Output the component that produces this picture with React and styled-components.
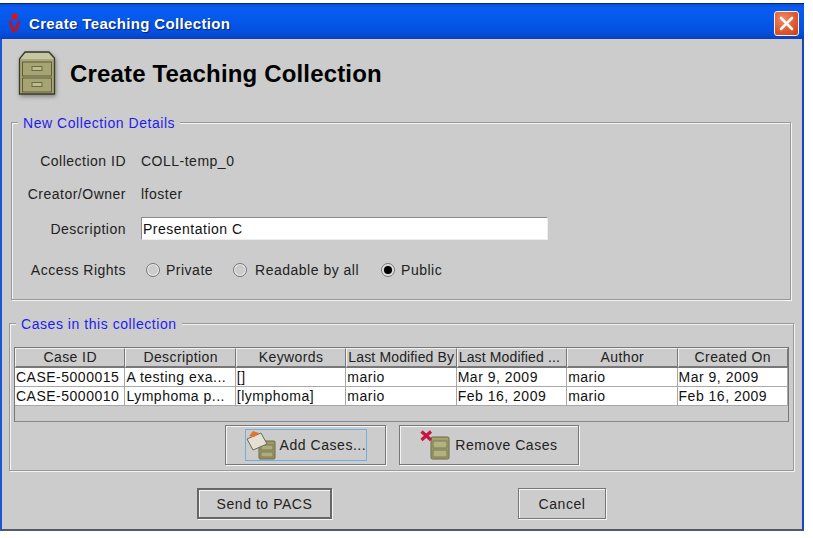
import { createGlobalStyle, styled } from "styled-components";

const Global = createGlobalStyle`
  html, body { margin: 0; padding: 0; background: #fff; }
  body { font-family: "Liberation Sans", Arial, sans-serif; }
`;

const Page = styled.div`
  width: 813px;
  height: 538px;
  padding-top: 3px;
  box-sizing: border-box;
  overflow: hidden;
`;

const Window = styled.div`
  width: 804px;
  height: 528px;
  box-sizing: border-box;
  background: #cccccc;
  border-left: 2px solid #1a55d8;
  border-right: 2px solid #1a45b8;
  border-bottom: 2px solid #555a68;
  display: flex;
  flex-direction: column;
`;

const TitleBar = styled.div`
  height: 36px;
  margin: 0 -2px;
  flex: none;
  display: flex;
  align-items: center;
  padding: 3px 5px 0 8px;
  background: linear-gradient(180deg, #0a4fd8 0%, #0a5cf2 12%, #0458ea 45%, #0450e0 80%, #0a3fc0 100%);
  border-top: 1px solid #06296e;
  box-sizing: border-box;
`;

const TitleText = styled.span`
  flex: 1;
  margin-left: 8px;
  color: #fff;
  font-size: 15px;
  font-weight: 700;
  letter-spacing: 0.35px;
  text-shadow: 1px 1px 1px #06257a;
`;

const CloseButton = styled.div`
  width: 25px;
  height: 25px;
  box-sizing: border-box;
  border: 1px solid #f2f2f2;
  border-radius: 3px;
  background: radial-gradient(circle at 35% 30%, #ef8a62 0%, #df5a30 55%, #c93f16 100%);
  display: flex;
  align-items: center;
  justify-content: center;
`;

const Header = styled.div`
  height: 83px;
  flex: none;
  display: flex;
  align-items: center;
  padding: 0 0 13px 16px;
  box-sizing: border-box;
  gap: 14px;
`;

const Heading = styled.h1`
  margin: 0;
  font-size: 24px;
  font-weight: 700;
  color: #000;
  letter-spacing: 0.16px;
`;

const Group = styled.section`
  margin: ${(p) => p.$top}px 0 0 ${(p) => p.$left}px;
  width: ${(p) => p.$width}px;
  height: ${(p) => p.$height}px;
  box-sizing: border-box;
  flex: none;
  border: 1px solid #999;
  box-shadow: inset 1px 1px 0 #f4f4f4, 1px 1px 0 #f4f4f4;
  position: relative;
`;

const Legend = styled.h2`
  position: absolute;
  top: -8px;
  left: 6px;
  margin: 0;
  padding: 0 5px;
  font-size: 14px;
  font-weight: 400;
  line-height: 16px;
  color: #1c1cf0;
  letter-spacing: 0.55px;
  background: #cccccc;
`;

const FormGrid = styled.div`
  display: grid;
  grid-template-columns: 114px 1fr;
  column-gap: 15px;
  padding-top: 21px;
`;

const FieldLabel = styled.div`
  height: ${(p) => p.$rowHeight}px;
  display: flex;
  align-items: center;
  justify-content: flex-end;
  font-size: 14px;
  letter-spacing: 0.5px;
  color: #222;
`;

const FieldValue = styled.div`
  height: ${(p) => p.$rowHeight}px;
  display: flex;
  align-items: center;
  font-size: 14px;
  letter-spacing: 0.5px;
  color: #222;
`;

const TextInput = styled.div`
  width: 407px;
  height: 23px;
  box-sizing: border-box;
  background: #fff;
  border: 1px solid #8a8a8a;
  border-right-color: #eee;
  border-bottom-color: #eee;
  padding-left: 1px;
  font-size: 14px;
  line-height: 23px;
  letter-spacing: 0.5px;
  color: #111;
`;

const RadioRow = styled.div`
  display: flex;
  align-items: center;
  padding-left: 5px;
`;

const RadioItem = styled.label`
  display: flex;
  align-items: center;
  gap: ${(p) => p.$inner}px;
  margin-right: ${(p) => p.$gap}px;
`;

const RadioCircle = styled.span`
  width: 14px;
  height: 14px;
  box-sizing: border-box;
  border-radius: 50%;
  border: 1px solid #777;
  box-shadow: 0 0 0 1px #eee inset;
  display: flex;
  align-items: center;
  justify-content: center;
  &::after {
    content: "";
    width: 8px;
    height: 8px;
    border-radius: 50%;
    background: ${(p) => (p.$checked ? "#000" : "transparent")};
  }
`;

const TableBox = styled.div`
  margin: 23px 0 0 4px;
  width: 775px;
  height: 75px;
  box-sizing: border-box;
  border: 1px solid #777;
  border-bottom-color: #888;
`;

const Row = styled.div`
  display: grid;
  grid-template-columns: repeat(7, 1fr);
  height: ${(p) => p.$height}px;
`;

const HeadCell = styled.div`
  box-sizing: border-box;
  border-left: 1px solid #f2f2f2;
  border-top: 1px solid #f2f2f2;
  border-right: 1px solid #777;
  border-bottom: 2px solid #777;
  font-size: 14px;
  line-height: 17px;
  letter-spacing: ${(p) => (p.$tight ? "0.15px" : "0.4px")};
  text-align: ${(p) => (p.$tight ? "left" : "center")};
  padding-left: ${(p) => (p.$tight ? "1px" : "0")};
  color: #222;
  white-space: nowrap;
  overflow: hidden;
`;

const BodyCell = styled.div`
  box-sizing: border-box;
  background: #fff;
  border-right: 1px solid #a8a8a8;
  border-bottom: 1px solid #a8a8a8;
  padding-left: 1px;
  font-size: 14px;
  line-height: 18px;
  letter-spacing: 0.5px;
  color: #111;
  white-space: nowrap;
  overflow: hidden;
`;

const CaseActions = styled.div`
  display: flex;
  margin: 3px 0 0 215px;
  gap: 13px;
`;

const RaisedButton = styled.div`
  width: ${(p) => p.$width}px;
  height: ${(p) => p.$height}px;
  box-sizing: border-box;
  border: 1px solid #777;
  box-shadow: 1px 1px 0 #f4f4f4, inset 1px 1px 0 #f4f4f4;
  display: flex;
  align-items: center;
  justify-content: center;
  font-size: 14px;
  letter-spacing: 0.55px;
  color: #222;
  white-space: nowrap;
`;

const DefaultButton = styled(RaisedButton)`
  border: 2px solid #666;
`;

const FocusBox = styled.div`
  width: 122px;
  height: 32px;
  box-sizing: border-box;
  border: 1px solid #72aee0;
  display: flex;
  align-items: center;
  gap: 4px;
`;

const IconText = styled.div`
  display: flex;
  align-items: center;
  gap: 5px;
`;

const Footer = styled.div`
  display: flex;
  margin: 17px 0 0 195px;
  gap: 186px;
`;

const AppMark = () => (
  <svg width="13" height="20" viewBox="0 0 13 20">
    <circle cx="6.5" cy="3.5" r="3.2" fill="#d8141c" />
    <path d="M2 8 L5.6 19 M11 8 L7.4 19" stroke="#c8101c" strokeWidth="2.6" fill="none" />
  </svg>
);

const CloseX = () => (
  <svg width="15" height="15" viewBox="0 0 15 15">
    <path d="M2 2 L13 13 M13 2 L2 13" stroke="#fff" strokeWidth="2.6" strokeLinecap="round" />
  </svg>
);

const Cabinet = () => (
  <svg width="38" height="46" viewBox="0 0 38 46" style={{ filter: "drop-shadow(1px 2px 2px rgba(0,0,0,.35))" }}>
    <path d="M1.5 8 L7 1 H31 L36.5 7 V43 H1.5 Z" fill="#a9a878" stroke="#3a3a26" strokeWidth="1.3" />
    <path d="M2.5 8 L7.5 2 H30.5 L35.5 8 Z" fill="#c6c6a6" />
    <rect x="4.5" y="11" width="29" height="14" fill="#a5a472" stroke="#5c5b38" />
    <rect x="4.5" y="27" width="29" height="14" fill="#a5a472" stroke="#5c5b38" />
    <rect x="14" y="15.5" width="10" height="4" fill="#bdbc8e" stroke="#6a6946" />
    <rect x="14" y="31.5" width="10" height="4" fill="#bdbc8e" stroke="#6a6946" />
  </svg>
);

const AddIcon = () => (
  <svg width="30" height="30" viewBox="0 0 30 30" style={{ flex: "none" }}>
    <rect x="13" y="11" width="16" height="18" rx="1" fill="#9d9c68" stroke="#6a6946" />
    <rect x="15" y="15" width="12" height="5" fill="#aead7a" stroke="#7c7b55" />
    <rect x="15" y="22" width="12" height="5" fill="#aead7a" stroke="#7c7b55" />
    <path d="M1 9 L15 3 L21 14 L7 20 Z" fill="#e4e0d4" stroke="#6a6a60" />
    <path d="M3 6 L7 1 L13 3 L8 7 Z" fill="#e0782c" />
  </svg>
);

const RemoveIcon = () => (
  <svg width="30" height="30" viewBox="0 0 30 30">
    <rect x="11" y="7" width="18" height="22" rx="1.5" fill="#a3a26e" stroke="#6a6946" />
    <rect x="13" y="11" width="14" height="7" fill="#b3b27f" stroke="#7c7b55" />
    <rect x="13" y="20" width="14" height="7" fill="#b3b27f" stroke="#7c7b55" />
    <path d="M1.5 1.5 L11 10 M11 1.5 L1.5 10" stroke="#c81440" strokeWidth="3.2" />
  </svg>
);

const columns = ["Case ID", "Description", "Keywords", "Last Modified By", "Last Modified ...", "Author", "Created On"];

const cases = [
  ["CASE-5000015", "A testing exa...", "[]", "mario", "Mar 9, 2009", "mario", "Mar 9, 2009"],
  ["CASE-5000010", "Lymphoma p...", "[lymphoma]", "mario", "Feb 16, 2009", "mario", "Feb 16, 2009"],
];

export default function App() {
  return (
    <Page>
      <Global />
      <Window>
        <TitleBar>
          <AppMark />
          <TitleText>Create Teaching Collection</TitleText>
          <CloseButton>
            <CloseX />
          </CloseButton>
        </TitleBar>
        <Header>
          <Cabinet />
          <Heading>Create Teaching Collection</Heading>
        </Header>

        <Group $top={0} $left={9} $width={780} $height={178}>
          <Legend>New Collection Details</Legend>
          <FormGrid>
            <FieldLabel $rowHeight={33}>Collection ID</FieldLabel>
            <FieldValue $rowHeight={33}>COLL-temp_0</FieldValue>
            <FieldLabel $rowHeight={33}>Creator/Owner</FieldLabel>
            <FieldValue $rowHeight={33}>lfoster</FieldValue>
            <FieldLabel $rowHeight={37}>Description</FieldLabel>
            <FieldValue $rowHeight={37}>
              <TextInput>Presentation C</TextInput>
            </FieldValue>
            <FieldLabel $rowHeight={46}>Access Rights</FieldLabel>
            <FieldValue $rowHeight={46}>
              <RadioRow>
                <RadioItem $inner={6} $gap={20}>
                  <RadioCircle />
                  Private
                </RadioItem>
                <RadioItem $inner={8} $gap={22}>
                  <RadioCircle />
                  Readable by all
                </RadioItem>
                <RadioItem $inner={6}>
                  <RadioCircle $checked />
                  Public
                </RadioItem>
              </RadioRow>
            </FieldValue>
          </FormGrid>
        </Group>

        <Group $top={23} $left={7} $width={785} $height={148}>
          <Legend>Cases in this collection</Legend>
          <TableBox>
            <Row $height={20}>
              {columns.map((c, i) => (
                <HeadCell key={c} $tight={i === 3 || i === 4}>
                  {c}
                </HeadCell>
              ))}
            </Row>
            {cases.map((row) => (
              <Row key={row[0]} $height={19}>
                {row.map((v, i) => (
                  <BodyCell key={i}>{v}</BodyCell>
                ))}
              </Row>
            ))}
          </TableBox>
          <CaseActions>
            <RaisedButton $width={161} $height={40}>
              <FocusBox>
                <AddIcon />
                Add Cases...
              </FocusBox>
            </RaisedButton>
            <RaisedButton $width={180} $height={40}>
              <IconText>
                <RemoveIcon />
                Remove Cases
              </IconText>
            </RaisedButton>
          </CaseActions>
        </Group>

        <Footer>
          <DefaultButton $width={135} $height={31}>Send to PACS</DefaultButton>
          <RaisedButton $width={88} $height={31}>Cancel</RaisedButton>
        </Footer>
      </Window>
    </Page>
  );
}
